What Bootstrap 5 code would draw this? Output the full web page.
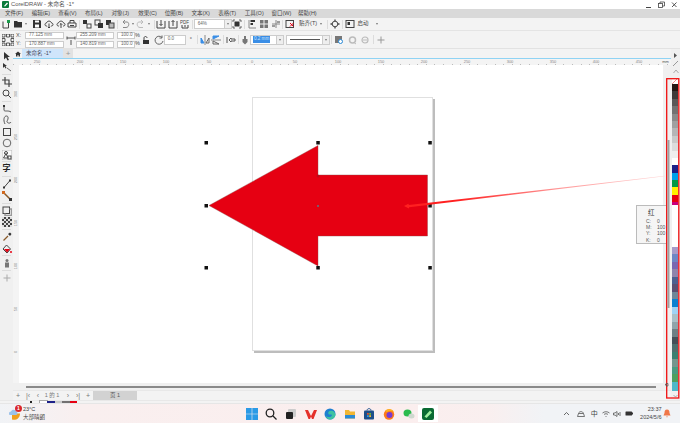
<!DOCTYPE html>
<html lang="zh">
<head>
  <meta charset="UTF-8">
  <title>CorelDRAW - 未命名 -1*</title>
  <link href="https://cdn.jsdelivr.net/npm/bootstrap@5.3.3/dist/css/bootstrap.min.css" rel="stylesheet" />
  <style>
    html, body { margin: 0; height: 423px; overflow: hidden; }
    body { width: 680px; background: #f3f3f3; color: #444; font: 5.5px/1 "Liberation Sans", "Noto Sans CJK SC", sans-serif; }
    .shell { width: 680px; height: 423px; }
    svg { display: block; flex: none; }
    .ic { width: 10px; height: 10px; fill: none; stroke: #444; stroke-width: 1; }
    .ic .dk { fill: #333; stroke: none; }
    .ic .gr { fill: #777; stroke: none; }
    .ic .gn { fill: #1a9a4a; stroke: none; }
    .ic .or { fill: #d2691e; stroke: none; }
    .ic .mu { stroke: #bbb; }
    .ic .rd { fill: #e60012; stroke: none; }
    .titlebar { height: 9px; background: #fff; padding-left: 2px; color: #555; font-size: 5.8px; }
    .titlebar .name { margin-left: 2px; }
    .winbtns { margin-left: auto; padding-right: 1px; gap: 4px; }
    .menubar { height: 9px; background: #d9d9d9; padding-left: 5px; color: #444; }
    .menubar span { width: 26.65px; flex: none; white-space: nowrap; }
    .toolbar { height: 13px; border-bottom: 1px solid #e4e4e4; }
    .propbar { height: 18px; padding-left: 2px; border-bottom: 1px solid #e2e2e2; }
    .tb { width: 11.7px; flex: none; display: flex; justify-content: center; }
    .tbn { width: 10px; flex: none; display: flex; justify-content: center; }
    .vsep { width: 1px; height: 9px; background: #dcdcdc; flex: none; margin: 0 1px; }
    .caret { width: 0; height: 0; border: 1.5px solid transparent; border-top: 2px solid #777; border-bottom: 0; flex: none; margin: 0 1px; }
    .ml2 { margin-left: 2px; }
    .ml3 { margin-left: 3px; }
    .ml5 { margin-left: 5px; }
    .fld { height: 6px; border: 1px solid #ccc; background: #fff; display: flex; align-items: center; padding-left: 3px; color: #666; font-size: 4.6px; flex: none; box-sizing: content-box; }
    .w-zoom { width: 26px; height: 8px; }
    .w-pos { width: 34px; height: 5px; }
    .w-siz { width: 33px; height: 5px; }
    .w-pct { width: 13px; height: 5px; }
    .w-rot { width: 17px; height: 8px; }
    .fld-sel { width: 23px; height: 8px; padding-left: 2px; }
    .fld-sel b { background: #3a8ee6; color: #cfe5fb; font-weight: 400; padding: 1px; }
    .fld-line { width: 32px; height: 8px; }
    .fld-line i { width: 30px; border-top: 1px solid #555; }
    .dropbox { width: 6px; height: 8px; border: 1px solid #ccc; border-left: 0; background: #eee; display: flex; align-items: center; justify-content: center; flex: none; box-sizing: content-box; }
    .dropbox .caret { margin: 0; }
    .stack2 { gap: 2px; }
    .lbl-xy { width: 9px; gap: 3px; color: #555; margin-left: 2px; }
    .pct-col { width: 5px; }
    .snap-txt { width: 20px; flex: none; white-space: nowrap; }
    .start-txt { width: 14px; flex: none; white-space: nowrap; }
    .mainrow { height: 351px; }
    .toolbox { width: 13px; background: #f0f0f0; padding-top: 1px; flex: none; }
    .toolbox .tb { width: 13px; height: 11.5px; align-items: center; }
    .toolbox hr { width: 9px; margin: 1.2px 2px; border: 0; border-top: 1px solid #dcdcdc; opacity: 1; }
    .zi { font-size: 8px; font-weight: 700; color: #222; }
    .center { width: 658px; flex: none; }
    .tabbar { height: 9px; flex: none; }
    .hometab { width: 9px; display: flex; justify-content: center; }
    .doctab { width: 41px; height: 9px; background: #cfe5fb; padding-left: 4px; color: #445; }
    .addtab { width: 10px; height: 9px; background: #e2e2e2; color: #999; justify-content: center; font-size: 8px; }
    .blueline { height: 1px; background: #8fd3f4; flex: none; }
    .hruler { height: 6px; flex: none; background: #f4f4f4 repeating-linear-gradient(90deg, #bbb 0 1px, transparent 1px 8.6px) 0 100% / 100% 1px no-repeat; color: #888; font-size: 4px; padding-left: 2.5px; overflow: hidden; }
    .hruler span { width: 43px; flex: none; text-align: center; }
    .hruler .unit { width: 10px; color: #555; }
    .canvasrow { height: 318px; flex: none; }
    .vruler { width: 6px; flex: none; background: #f4f4f4; color: #888; font-size: 4px; padding-top: 7.5px; overflow: hidden; }
    .vruler span { height: 43px; flex: none; display: flex; align-items: center; justify-content: center; }
    .vruler em { font-style: normal; transform: rotate(-90deg); }
    .sheet { width: 644px; height: 318px; background: #fff; flex: none; }
    .vstrip { width: 8px; background: #f0f0f0; flex: none; }
    .hscroll { height: 7px; background: #f0f0f0; padding-left: 13px; flex: none; }
    .hscroll i { display: block; width: 630px; height: 2px; background: #8a8a8a; }
    .pagenav { height: 10px; flex: none; border-top: 1px solid #e8e8e8; color: #777; }
    .pagenav .tb { width: 10px; font-size: 7px; }
    .pagenav .cnt { width: 20px; text-align: center; flex: none; margin-left: -1px; margin-right: 1px; }
    .pagetab { width: 44px; height: 9px; background: #d2d2d2; color: #555; justify-content: center; }
    .rightcol { width: 9px; background: #f0f0f0; flex: none; padding-top: 2px; }
    .rightcol .tb { width: 9px; height: 8px; align-items: center; }
    .swatches { width: 6px; margin-left: 1px; margin-top: .5px; flex: none; }
    .nocolor { height: 5.5px; margin-left: 1px; width: 6px; margin-top: 3px; }
    .palette-end { margin: 3px 0 0 2px; }
    .statusbar { height: 3px; border-top: 1px solid #e8e8e8; padding-left: 30px; flex: none; background: #f3f3f3; }
    .statusbar i { display: block; height: 2px; flex: none; }
    .st-dot { width: 2px; background: #222; margin-right: 8px; }
    .st-white { width: 7px; background: #fff; outline: 1px solid #aaa; }
    .st-navy { width: 8px; background: #1d2088; }
    .st-grey { width: 7px; background: #c9caca; }
    .st-dark { width: 8px; background: #727171; }
    .st-red { width: 7px; background: #e60012; }
    .taskbar { height: 20px; flex: none; background: linear-gradient(90deg, #f1f3f6 0%, #f9efef 12%, #fbeeee 60%, #f9efef 72%, #f1f3f6 80%); border-top: 1px solid #e6e6e6; padding: 0 7px 0 9px; }
    .weather { width: 14px; height: 13px; position: relative; }
    .badge-one { position: absolute; left: 6px; top: -2px; width: 7px; height: 7px; border-radius: 50%; background: #d9262c; color: #fff; font-size: 5px; font-weight: 700; display: flex; align-items: center; justify-content: center; }
    .weatxt { width: 22px; flex: none; gap: 3px; color: #444; white-space: nowrap; }
    .apps { width: 195px; margin-left: 197px; flex: none; }
    .apps > div { width: 19.6px; height: 17px; flex: none; display: flex; align-items: center; justify-content: center; }
    .apps .on { background: #fff; }
    .apps svg { width: 12px; height: 12px; }
    .tray { margin-left: auto; color: #444; }
    .tray .tb { width: 11.5px; }
    .tray .tb-wide { width: 14.5px; }
    .tray .cn { font-size: 7px; }
    .clock { width: 27px; text-align: right; gap: 3px; padding-right: 0; white-space: nowrap; }
    .tipbox { position: absolute; left: 636px; top: 205px; width: 30px; height: 39px; background: #f5f5f5; border: 1px solid #bbb; border-right: 0; padding: 4px 0 0 9px; color: #555; font-size: 5px; }
    .tipbox .hd { font-size: 6.5px; margin: 0 0 2.5px 2px; color: #333; }
    .tipbox .rw { height: 6.2px; white-space: nowrap; }
    .tipbox .rw span:first-child { width: 11px; }
    .overlay { position: absolute; left: 0; top: 0; pointer-events: none; }
  </style>
</head>
<body>
<div class="shell position-relative d-flex flex-column">

  <!-- title -->
  <div class="titlebar d-flex align-items-center">
    <svg width="7" height="7" viewBox="0 0 7 7"><rect width="7" height="7" rx="1" fill="#0b7a3b"/><path d="M2 5 L5 1.5 L6 2.5 L3 5.5Z" fill="#fff"/></svg>
    <span class="name">CorelDRAW - 未命名 -1*</span>
    <div class="winbtns d-flex align-items-center">
      <svg width="9" height="8" viewBox="0 0 9 8"><path d="M2 6.5H7" stroke="#444" stroke-width="1"/></svg>
      <svg width="9" height="8" viewBox="0 0 9 8" fill="none" stroke="#444" stroke-width=".8"><rect x="1.5" y="2.5" width="4" height="4"/><path d="M3 2.5V1H7.5V5H5.5"/></svg>
      <svg width="9" height="8" viewBox="0 0 9 8" stroke="#444" stroke-width=".9"><path d="M2 1.5 6.5 6M6.5 1.5 2 6"/></svg>
    </div>
  </div>

  <!-- menu -->
  <div class="menubar d-flex align-items-center">
    <span>文件(F)</span><span>编辑(E)</span><span>查看(V)</span><span>布局(L)</span><span>对象(J)</span><span>效果(C)</span><span>位图(B)</span><span>文本(X)</span><span>表格(T)</span><span>工具(O)</span><span>窗口(W)</span><span>帮助(H)</span>
  </div>

  <!-- standard toolbar -->
  <div class="toolbar d-flex align-items-center">
    <div class="tb"><svg class="ic" viewBox="0 0 10 10"><path d="M2 2.500V9H7.500V4"/><rect class="gn" x="6" y="1" width="3" height="3"/></svg></div>
    <div class="tb"><svg class="ic" viewBox="0 0 10 10"><path class="dk" d="M1 2H4L5 3H9V8.500H1Z"/></svg></div>
    <span class="caret ml2"></span>
    <div class="tb ml3"><svg class="ic" viewBox="0 0 10 10"><path class="dk" d="M1 1H8L9 2V9H1Z"/><rect x="3" y="1.500" width="4" height="2" fill="#fff" stroke="none"/><rect x="3" y="5.500" width="4" height="3" fill="#fff" stroke="none"/></svg></div>
    <div class="tb"><svg class="ic" viewBox="0 0 10 10"><path d="M3 7H2.500C.5 7 .5 4 2.500 4 3 1.500 7 1.500 7.500 4 9.500 4 9.500 7 7.500 7H7M5 4.500V9M3.800 7.800 5 9 6.200 7.800"/></svg></div>
    <div class="tb"><svg class="ic" viewBox="0 0 10 10"><path d="M3 7H2.500C.5 7 .5 4 2.500 4 3 1.500 7 1.500 7.500 4 9.500 4 9.500 7 7.500 7H7M5 9V4.500M3.800 5.700 5 4.500 6.200 5.700"/></svg></div>
    <div class="tb"><svg class="ic" viewBox="0 0 10 10"><path d="M3 4V1.500H7V4M1 4H9V8H1ZM3 6.500H7"/></svg></div>
    <span class="vsep"></span>
    <div class="tb"><svg class="ic" viewBox="0 0 10 10"><path class="dk" d="M1 1H5V5H1Z"/><rect x="5" y="5" width="4" height="4"/></svg></div>
    <div class="tb"><svg class="ic" viewBox="0 0 10 10"><rect x="1" y="1" width="5" height="5"/><rect class="dk" x="4" y="4" width="5" height="5"/></svg></div>
    <div class="tb"><svg class="ic" viewBox="0 0 10 10"><rect class="dk" x="1" y="1" width="5" height="5"/><rect x="4" y="4" width="5" height="5" fill="#bbb"/></svg></div>
    <span class="vsep"></span>
    <div class="tb"><svg class="ic" viewBox="0 0 10 10"><path d="M3 3H7C9.500 3 9.500 8.500 6 8.500H3M3 3 5 1M3 3 5 5" stroke="#888"/></svg></div>
    <span class="caret"></span>
    <div class="tb"><svg class="ic" viewBox="0 0 10 10"><path class="mu" d="M7 3H3C.5 3 .5 8.500 4 8.500H7M7 3 5 1M7 3 5 5"/></svg></div>
    <span class="caret"></span>
    <span class="vsep ml3"></span>
    <div class="tb"><svg class="ic" viewBox="0 0 10 10"><path d="M1 2V9H9V2M5 1V6.500M3.500 5 5 6.500 6.500 5"/></svg></div>
    <div class="tb"><svg class="ic" viewBox="0 0 10 10"><path d="M1 2V9H9V2M5 7V1.500M3.500 3 5 1.500 6.500 3"/></svg></div>
    <div class="tb"><svg class="ic" viewBox="0 0 10 10"><path d="M2 6V9H8V6M5 6V8"/><text x="0" y="5" font-size="4.500" fill="#444" stroke="none">PDF</text></svg></div>
    <span class="vsep"></span>
    <div class="fld w-zoom">64%</div><div class="dropbox"><span class="caret"></span></div>
    <div class="tb"><svg class="ic" viewBox="0 0 10 10"><path class="dk" d="M2.500 2.500H7.500V7.500H2.500Z"/><path d="M1 3V1H3M7 1H9V3M9 7V9H7M3 9H1V7" stroke-width=".8"/></svg></div>
    <span class="vsep"></span>
    <div class="tb"><svg class="ic" viewBox="0 0 10 10" stroke-width=".8"><path d="M2 1V9H9" stroke="#888"/><path class="dk" d="M3.500 1H8V3H3.500ZM3.500 4H6V6H3.500Z"/></svg></div>
    <div class="tb"><svg class="ic" viewBox="0 0 10 10"><path class="gr" d="M1 1H4.500V4.500H1ZM5.500 1H9V4.500H5.500ZM1 5.500H4.500V9H1ZM5.500 5.500H9V9H5.500Z"/></svg></div>
    <div class="tb"><svg class="ic" viewBox="0 0 10 10" stroke-width=".8"><path d="M5 1V9M1 5H9" stroke="#888"/><path d="M6 3H9M1 7H4"/></svg></div>
    <span class="vsep"></span>
    <div class="tb"><svg class="ic" viewBox="0 0 10 10" stroke-width=".8"><rect x="1" y="1.500" width="7.500" height="7"/><path d="M5 4 8.500 7.500M8.500 4 5 7.500" stroke="#e60012"/></svg></div>
    <span class="snap-txt ml3">贴齐(T)</span><span class="caret"></span>
    <span class="vsep ms-1"></span>
    <div class="tb"><svg class="ic" viewBox="0 0 10 10" stroke-width="1.500"><circle cx="5" cy="5" r="2.800"/><path d="M5 .5V2M5 8V9.500M.5 5H2M8 5H9.500" stroke-width="1.300"/></svg></div>
    <span class="vsep"></span>
    <div class="tb"><svg class="ic" viewBox="0 0 10 10"><rect x="1" y="1.500" width="8" height="7"/><path class="dk" d="M2.500 3H5V6H2.500Z"/></svg></div>
    <span class="start-txt ml2">启动</span><span class="caret ml5"></span>
  </div>

  <!-- property bar -->
  <div class="propbar d-flex align-items-center">
    <svg width="12" height="12" viewBox="0 0 12 12"><path d="M0 0h3v3H0zM4.500 0h3v3h-3zM9 0h3v3H9zM0 4.500h3v3H0zM9 4.500h3v3H9zM0 9h3v3H0zM4.500 9h3v3h-3zM9 9h3v3H9z" fill="none" stroke="#333" stroke-width=".8"/></svg>
    <div class="lbl-xy d-flex flex-column"><span>X:</span><span>Y:</span></div>
    <div class="d-flex flex-column stack2"><div class="fld w-pos">77.125 mm</div><div class="fld w-pos">170.887 mm</div></div>
    <div class="tbn ml2"><svg class="ic" viewBox="0 0 10 10"><path d="M1 3H9M5 5V10M1 1.500V4.500M9 1.500V4.500" stroke-width=".9"/></svg></div>
    <div class="d-flex flex-column stack2"><div class="fld w-siz">255.209 mm</div><div class="fld w-siz">140.819 mm</div></div>
    <div class="d-flex flex-column stack2 ml3"><div class="fld w-pct">100.0</div><div class="fld w-pct">100.0</div></div>
    <div class="d-flex flex-column stack2 pct-col"><span>%</span><span>%</span></div>
    <div class="tb"><svg class="ic" viewBox="0 0 10 10"><path d="M3 5V3C3 1 6 1 6 3"/><rect class="dk" x="2" y="5" width="6" height="4"/></svg></div>
    <div class="tbn ml2"><svg class="ic" viewBox="0 0 10 10"><path d="M8 2.500A4 4 0 1 0 9 6M8 .5V3H5.500" stroke="#666"/></svg></div>
    <div class="fld w-rot">0.0</div>
    <span class="mx-1">°</span>
    <span class="vsep"></span>
    <div class="tb"><svg class="ic" viewBox="0 0 10 10"><path d="M5 0V10" stroke="#888"/><path d="M1 8V3L4 8Z" fill="#3a8ee6" stroke="#3a8ee6"/><path d="M9 8V3L6 8Z" stroke="#666"/></svg></div>
    <div class="tb"><svg class="ic" viewBox="0 0 10 10"><path d="M0 5H10" stroke="#888"/><path d="M2 1H8L2 4Z" fill="#3a8ee6" stroke="#3a8ee6"/><path d="M2 9H8L2 6Z" stroke="#666"/></svg></div>
    <span class="vsep"></span>
    <div class="tb"><svg class="ic" viewBox="0 0 10 10"><path d="M3 5 5 3V4H9V6H5V7Z M1 2V8" stroke="#555"/></svg></div>
    <span class="vsep"></span>
    <div class="tbn"><svg class="ic" viewBox="0 0 10 10"><path class="gr" d="M4 1H6V4H7.500V7L5 9.500 2.500 7V4H4Z"/></svg></div>
    <div class="fld fld-sel"><b>0.2 mm</b></div><div class="dropbox"><span class="caret"></span></div>
    <div class="fld fld-line ml2"><i></i></div><div class="dropbox"><span class="caret"></span></div>
    <span class="vsep"></span>
    <div class="tb"><svg class="ic" viewBox="0 0 10 10"><rect class="gr" x="1" y="1" width="7" height="7"/><circle cx="6.500" cy="6.500" r="2" fill="#fff" stroke="#2a8ad6"/></svg></div>
    <div class="tb ml3"><svg class="ic" viewBox="0 0 10 10"><circle cx="4.500" cy="5" r="3" class="mu" stroke-width="1.500"/><path class="mu" d="M6 7.500 8 9"/></svg></div>
    <div class="tb"><svg class="ic" viewBox="0 0 10 10"><circle cx="5" cy="5" r="3" class="mu" stroke-width="1.200"/><path class="mu" d="M3 5H7"/></svg></div>
    <span class="vsep ml2"></span>
    <div class="tb"><svg class="ic" viewBox="0 0 10 10"><path d="M5 1.500V8.500M1.500 5H8.500" stroke="#999"/></svg></div>
  </div>

  <!-- workspace -->
  <div class="mainrow d-flex">
    <div class="toolbox d-flex flex-column">
      <div class="tb"><svg class="ic" viewBox="0 0 10 10"><path class="dk" d="M2 1V8.500L4 6.500 5.500 9.500 7 9 5.500 6H8Z"/></svg></div>
      <div class="tb"><svg class="ic" viewBox="0 0 10 10"><path class="dk" d="M1 1V6L2.500 4.500 3.500 6.500 4.500 6 3.500 4H5Z"/><path d="M5 6 9 9" stroke-width=".8"/></svg></div>
      <hr>
      <div class="tb"><svg class="ic" viewBox="0 0 10 10"><path d="M3 0V7H10M0 3H7V10" stroke-width="1.200"/></svg></div>
      <div class="tb"><svg class="ic" viewBox="0 0 10 10"><circle cx="4" cy="4" r="3"/><path d="M6.200 6.200 9 9"/></svg></div>
      <hr>
      <div class="tb"><svg class="ic" viewBox="0 0 10 10"><path d="M2 1V6C2 8 6 6 9 8" stroke-width=".9"/><path class="dk" d="M1 1H3V3H1Z"/></svg></div>
      <div class="tb"><svg class="ic" viewBox="0 0 10 10"><path d="M3 9C1 5 2 1 4.500 1 7 1 6 5 5 6 4.500 8 8 9 9 7" stroke-width=".9"/></svg></div>
      <div class="tb"><svg class="ic" viewBox="0 0 10 10"><rect x="1.500" y="1.500" width="7" height="7" stroke-width="1"/></svg></div>
      <div class="tb"><svg class="ic" viewBox="0 0 10 10"><circle cx="5" cy="5" r="3.800" stroke="#666"/></svg></div>
      <div class="tb"><svg class="ic" viewBox="0 0 10 10" stroke-width=".8"><rect x="0" y="0" width="10" height="10" stroke="#bbb" fill="#fafafa"/><path d="M1.500 8 4 3.500 6 8Z"/><circle cx="4" cy="3" r="1.500"/><rect x="6" y="6" width="3" height="3"/></svg></div>
      <hr>
      <div class="tb"><span class="zi">字</span></div>
      <hr>
      <div class="tb"><svg class="ic" viewBox="0 0 10 10"><path d="M2 8.500 8 1.500"/><path class="dk" d="M1 7.500H3V9.500H1ZM7 .5H9V2.500H7Z"/></svg></div>
      <div class="tb"><svg class="ic" viewBox="0 0 10 10"><path d="M2 2 8 8" stroke="#8a5a2a" stroke-width="1.500"/><path class="or" d="M0 0H3V3H0Z"/><path class="dk" d="M7 7H10V10H7Z"/></svg></div>
      <hr>
      <div class="tb"><svg class="ic" viewBox="0 0 10 10"><rect x="1" y="1" width="6.500" height="6.500"/><path d="M7.500 3H9.500V9.500H3V7.500" stroke="#999" stroke-width="1.500"/></svg></div>
      <div class="tb"><svg width="10" height="10" viewBox="0 0 10 10"><rect width="10" height="10" fill="#444"/><path d="M0 0h2v2H0zM4 0h2v2H4zM8 0h2v2H8zM2 2h2v2H2zM6 2h2v2H6zM0 4h2v2H0zM4 4h2v2H4zM8 4h2v2H8zM2 6h2v2H2zM6 6h2v2H6zM0 8h2v2H0zM4 8h2v2H4zM8 8h2v2H8z" fill="#ddd"/></svg></div>
      <hr>
      <div class="tb"><svg class="ic" viewBox="0 0 10 10"><path d="M1.500 8.500 6 4" stroke="#8a5a2a" stroke-width="1.300"/><path class="dk" d="M6 2 8 .5 9.500 2 8 4Z"/></svg></div>
      <div class="tb"><svg class="ic" viewBox="0 0 10 10"><path d="M4.500 1 1 5 5 9 8.500 5Z" stroke="#444"/><path class="rd" d="M2 5H8L5 8.500Z"/><circle class="rd" cx="9" cy="8" r="1"/></svg></div>
      <hr>
      <div class="tb"><svg class="ic" viewBox="0 0 10 10"><circle class="gr" cx="5" cy="2.500" r="1.500"/><path class="gr" d="M3 4.500H7V9.500H3Z"/></svg></div>
      <hr>
      <div class="tb"><svg class="ic" viewBox="0 0 10 10"><path d="M5 1.500V8.500M1.500 5H8.500" stroke="#aaa"/></svg></div>
    </div>

    <div class="center d-flex flex-column">
      <div class="tabbar d-flex">
        <div class="hometab d-flex align-items-center"><svg width="6" height="6" viewBox="0 0 6 6"><path d="M3 .5 6 3H5V5.500H3.500V4H2.500V5.500H1V3H0Z" fill="#333"/></svg></div>
        <div class="doctab d-flex align-items-center">未命名 -1*</div>
        <div class="addtab d-flex align-items-center">+</div>
      </div>
      <div class="blueline"></div>
      <div class="hruler d-flex align-items-center">
        <span>250</span><span>200</span><span>150</span><span>100</span><span>50</span><span>0</span><span>50</span><span>100</span><span>150</span><span>200</span><span>250</span><span>300</span><span>350</span><span>400</span><span>450</span><span class="unit">mm</span>
      </div>
      <div class="canvasrow d-flex">
        <div class="vruler d-flex flex-column">
          <span><em>300</em></span><span><em>250</em></span><span><em>200</em></span><span><em>150</em></span><span><em>100</em></span><span><em>50</em></span><span><em>0</em></span>
        </div>
        <div class="sheet">
          <svg width="644" height="318" viewBox="19 65 644 318">
            <rect x="254" y="99" width="181" height="254" fill="#bdbdbd"/>
            <rect x="252.500" y="97.500" width="180" height="253" fill="#fff" stroke="#e0e0e0"/>
            <path d="M209 205.500 318 145.500V175H427.500V236H318V266Z" fill="#e60012" stroke="#8a4a4a" stroke-width=".4"/>
            <g fill="#111">
              <rect x="204.500" y="141" width="3.500" height="3.500"/><rect x="316.300" y="141" width="3.500" height="3.500"/><rect x="428.300" y="141" width="3.500" height="3.500"/>
              <rect x="204.500" y="204" width="3.500" height="3.500"/><rect x="428.300" y="204" width="3.500" height="3.500"/>
              <rect x="204.500" y="266" width="3.500" height="3.500"/><rect x="316.300" y="266" width="3.500" height="3.500"/><rect x="428.300" y="266" width="3.500" height="3.500"/>
            </g>
            <rect x="317" y="205" width="2" height="2" fill="#7a5a6a"/>
            <circle cx="318" cy="176" r="1" fill="none" stroke="#a01020" stroke-width=".6"/>
          </svg>
        </div>
        <div class="vstrip"></div>
      </div>
      <div class="hscroll d-flex align-items-center"><i></i></div>
      <div class="pagenav d-flex align-items-center">
        <div class="tb">+</div>
        <div class="tb">|‹</div>
        <div class="tb">‹</div>
        <span class="cnt">1 的 1</span>
        <div class="tb">›</div>
        <div class="tb">›|</div>
        <div class="tb">+</div>
        <div class="pagetab d-flex align-items-center">页 1</div>
      </div>
    </div>

    <div class="rightcol d-flex flex-column">
      <div class="tb"><svg width="5" height="5" viewBox="0 0 5 5"><path d="M1 0 4 2.500 1 5Z" fill="#555"/></svg></div>
      <div class="tb"><svg width="7" height="7" viewBox="0 0 7 7"><path d="M1 6 6 1" stroke="#999"/></svg></div>
      <div class="tb"><svg width="6" height="5" viewBox="0 0 6 5"><path d="M.5 4 3 1 5.500 4" fill="none" stroke="#aaa"/></svg></div>
      <div class="nocolor"><svg width="6" height="6" viewBox="0 0 6 6"><rect width="6" height="6" fill="#fff"/><path d="M0 6 6 0" stroke="#e06060" stroke-width=".7"/></svg></div>
      <div class="swatches" id="swatches"></div>
      <svg class="palette-end" width="5" height="4" viewBox="0 0 5 4"><path d="M.5 1 2.500 3 4.500 1" fill="none" stroke="#999" stroke-width=".8"/></svg>
    </div>
  </div>

  <div class="statusbar d-flex">
    <i class="st-dot"></i><i class="st-white"></i><i class="st-navy"></i><i class="st-grey"></i><i class="st-dark"></i><i class="st-red"></i>
  </div>

  <!-- taskbar -->
  <div class="taskbar d-flex align-items-center">
    <div class="weather">
      <svg width="13" height="13" viewBox="0 0 13 13"><path d="M3 12.500A6 6 0 0 0 11 6.500H3Z" fill="#f0a020"/><path d="M1 8C-.5 8-.5 4.500 2 4.500 3 2 7 2.500 7.500 5 9 5 9 8 7 8Z" fill="#9cc3ea"/></svg>
      <span class="badge-one">1</span>
    </div>
    <div class="weatxt d-flex flex-column"><span>23°C</span><span>大部晴朗</span></div>
    <div class="apps d-flex align-items-center">
      <div><svg viewBox="0 0 12 12"><path d="M0 0h5.700v5.700H0zM6.300 0H12v5.700H6.300zM0 6.300h5.700V12H0zM6.300 6.300H12V12H6.300z" fill="#2b9ae6"/></svg></div>
      <div><svg viewBox="0 0 12 12" fill="none" stroke="#222" stroke-width="1.300"><circle cx="5" cy="5" r="3.800"/><path d="M8 8 11.500 11.500"/></svg></div>
      <div><svg viewBox="0 0 12 12"><rect x="3" y="1" width="8" height="8" rx="1" fill="#ccc"/><rect x="1" y="4" width="7" height="7" rx="1" fill="#222"/></svg></div>
      <div><svg viewBox="0 0 12 12"><path d="M0 2H3L6 8 9 2H12L8.500 11H7L6 8.500 5 11H3.500Z" fill="#e5302a"/></svg></div>
      <div><svg viewBox="0 0 12 12"><circle cx="6" cy="6" r="5.500" fill="#1f7fd0"/><path d="M11.500 6.500C11 3 8 2 5.500 3 3.500 4 4 7 6.500 6.500 9 6 8 9 5 9 3.500 9 2.500 8.500 2 7.500 2 10 4 11.500 6 11.500 9 11.500 11.500 9 11.500 6.500Z" fill="#3fc2a0"/></svg></div>
      <div><svg viewBox="0 0 12 12"><path d="M1 2H5L6 3.500H11V10.500H1Z" fill="#f2b632"/><rect x="1" y="7" width="10" height="3.500" fill="#2a8ad6"/></svg></div>
      <div><svg viewBox="0 0 12 12"><rect x="1" y="2.500" width="10" height="9" rx="1" fill="#1f4f8a"/><path d="M4 2.500C4 0 8 0 8 2.500" fill="none" stroke="#1f4f8a"/><path d="M4 5h1.800v1.800H4z" fill="#e5502a"/><path d="M6.200 5H8v1.800H6.200z" fill="#7ab82a"/><path d="M4 7.200h1.800V9H4z" fill="#2a9ae6"/><path d="M6.200 7.200H8V9H6.200z" fill="#f2b632"/></svg></div>
      <div><svg viewBox="0 0 12 12"><circle cx="6" cy="6.500" r="5.200" fill="#ff7a1a"/><circle cx="6.500" cy="7" r="3" fill="#7a3ad0"/><path d="M2 3C4 .5 9 0 11 4 9 3 6 2.500 4 4Z" fill="#ffb020"/></svg></div>
      <div><svg viewBox="0 0 12 12"><ellipse cx="4.500" cy="5" rx="4" ry="3.500" fill="#2dbb4e"/><ellipse cx="8.500" cy="8" rx="3" ry="2.500" fill="#cfd8cf"/></svg></div>
      <div class="on"><svg viewBox="0 0 12 12"><rect width="12" height="12" rx="2" fill="#0a6a32"/><path d="M2.500 8.500 8 2.500 10 4.500 4.500 10Z" fill="#9ff0a0"/></svg></div>
    </div>
    <div class="tray d-flex align-items-center">
      <div class="tb tb-wide"><svg width="7" height="5" viewBox="0 0 7 5"><path d="M1 4 3.500 1.500 6 4" fill="none" stroke="#444" stroke-width=".8"/></svg></div>
      <div class="tb tb-wide"><svg width="8" height="7" viewBox="0 0 8 7" fill="none" stroke="#555" stroke-width=".8"><path d="M.5 6.500H7.500L6.500 3.500C6 1 2 1 1.500 3.500ZM1.500 3.500H6.500"/></svg></div>
      <div class="tb cn">中</div>
      <div class="tb"><svg width="8" height="6" viewBox="0 0 8 6" fill="none" stroke="#555" stroke-width=".8"><path d="M.5 2C2.500 .3 5.500 .3 7.500 2M2 3.500C3 2.500 5 2.500 6 3.500M3.500 5 4 5.500 4.500 5"/></svg></div>
      <div class="tb"><svg width="8" height="6" viewBox="0 0 8 6" fill="none" stroke="#555" stroke-width=".8"><path d="M.5 2V4H2L4 5.500V.5L2 2ZM5.500 2V4M7 1V5"/></svg></div>
      <div class="tb"><svg width="8" height="5" viewBox="0 0 8 5"><rect x=".5" y=".5" width="6.500" height="4" rx=".5" fill="#333"/><rect x="7" y="1.500" width="1" height="2" fill="#333"/></svg></div>
      <div class="clock d-flex flex-column"><span>23:37</span><span>2024/5/6</span></div>
      <div class="tb"><svg width="8" height="9" viewBox="0 0 8 9"><path d="M4 .5C6 .5 6.500 2 6.500 4L7.500 6.500H.5L1.500 4C1.500 2 2 .5 4 .5ZM3 7.500H5L4 8.500Z" fill="#f0784a"/></svg></div>
    </div>
  </div>

  <!-- colour tooltip -->
  <div class="tipbox">
    <div class="hd">红</div>
    <div class="rw d-flex"><span>C:</span><span>0</span></div>
    <div class="rw d-flex"><span>M:</span><span>100</span></div>
    <div class="rw d-flex"><span>Y:</span><span>100</span></div>
    <div class="rw d-flex"><span>K:</span><span>0</span></div>
  </div>

  <!-- annotation drawn over the screenshot -->
  <svg class="overlay" width="680" height="423" viewBox="0 0 680 423">
    <defs><linearGradient id="fade" gradientUnits="userSpaceOnUse" x1="405" y1="206" x2="665" y2="176"><stop offset="0" stop-color="#ff2020"/><stop offset=".2" stop-color="#ff2020"/><stop offset=".6" stop-color="#ff9a9a"/><stop offset="1" stop-color="#ffd8d8"/></linearGradient></defs>
    <path d="M665 175.800 665 176.200 409 207.300 409 208.400 404 206 408.500 203.800 408.800 205Z" fill="url(#fade)"/>
    <rect x="666.700" y="78.700" width="12.100" height="319.300" fill="none" stroke="#f01010" stroke-width="1.300"/>
    <rect x="667.500" y="140" width="2" height="168" fill="#a0a0a0"/>
    <path d="M665 384 667 386M666 383.500H668V386H666Z" stroke="#555" stroke-width=".7" fill="none"/>
  </svg>
</div>

<script>
  // palette colours, top part then the part below the hidden rows
  var top1 = ['#231815','#3e3a39','#595757','#727171','#898989','#9fa0a0','#b5b5b6','#c9caca','#dcdddd','#efefef','#ffffff','#1d2088','#00a0e9','#009944','#fff100','#e60012'];
  var bottom = ['#a79bc9','#6f86c4','#7a68b0','#8e84ac','#4d5f8f','#5a4f72','#6f8799','#0b80d0','#9fd3f5','#a9c0c8','#90a4aa','#6e7f85','#454f58','#4e6e6e','#3b7f70','#74958d','#4a9a80','#4f9f5f','#50b8c8'];
  var box = document.getElementById('swatches');
  function addSwatch(c, h) {
    var d = document.createElement('div');
    d.style.background = c;
    d.style.height = h + 'px';
    box.appendChild(d);
  }
  top1.forEach(function (c) { addSwatch(c, 7.4); });
  addSwatch('#c9007a', 2.6);
  addSwatch('#ffffff', 42);
  bottom.forEach(function (c, i) { addSwatch(c, i == 18 ? 9.5 : 7.5); });
</script>
<script src="https://cdn.jsdelivr.net/npm/bootstrap@5.3.3/dist/js/bootstrap.bundle.min.js"></script>
</body>
</html>
